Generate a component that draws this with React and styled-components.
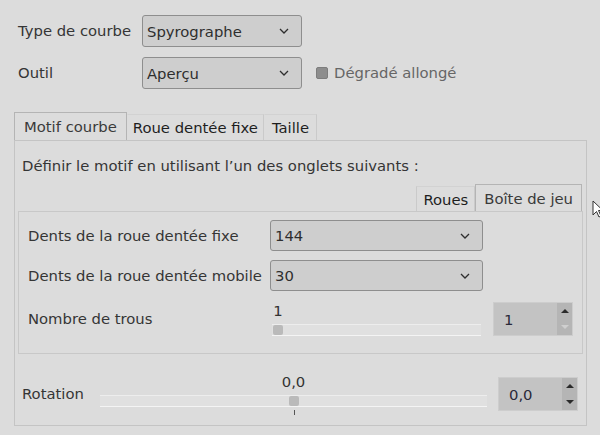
import React from 'react';
import styled, { createGlobalStyle } from 'styled-components';

const Global = createGlobalStyle`
  html, body { margin: 0; padding: 0; background: #dcdcdc; }
  body {
    width: 600px; height: 435px; overflow: hidden;
    font-family: "DejaVu Sans", "Noto Sans", sans-serif;
    font-size: 14.8px; color: #353535;
  }
`;

const Page = styled.div`
  position: relative;
  width: 600px;
  height: 435px;
  box-sizing: border-box;
  padding: 15px 13px 0 14px;
  background: #dcdcdc;
`;

const TopForm = styled.div`
  display: grid;
  grid-template-columns: 124px auto;
  row-gap: 10px;
  padding-left: 4px;
  align-items: center;
`;

const Label = styled.div`
  line-height: 20px;
  white-space: nowrap;
  color: ${p => p.$muted ? '#666' : '#353535'};
`;

const SelectBox = styled.div`
  box-sizing: border-box;
  width: ${p => p.$w}px;
  height: ${p => p.$h || 32}px;
  display: flex;
  align-items: center;
  justify-content: space-between;
  padding: 0 12px 0 4px;
  background: #cecece;
  border: 1px solid #8e8e8e;
  border-radius: 3px;
  color: #2e2e2e;
`;

const Inline = styled.div`
  display: flex;
  align-items: center;
`;

const CheckRow = styled.div`
  display: flex;
  align-items: center;
  gap: 6px;
  margin-left: 14px;
`;

const CheckBox = styled.div`
  width: 10px;
  height: 10px;
  background: #8d8d8d;
  border: 1px solid #7d7d7d;
  border-radius: 2px;
`;

const Notebook = styled.div`
  margin-top: ${p => p.$mt || 0}px;
  display: flex;
  flex-direction: column;
`;

const TabBar = styled.div`
  display: flex;
  align-items: flex-end;
  justify-content: ${p => p.$right ? 'flex-end' : 'flex-start'};
  height: ${p => p.$h}px;
  padding-right: ${p => p.$pr || 0}px;
`;

const Tab = styled.div`
  box-sizing: border-box;
  height: ${p => p.$active ? p.$h : p.$h - 2}px;
  display: flex;
  align-items: center;
  padding: 0 ${p => p.$pad || 7}px;
  white-space: nowrap;
  color: ${p => p.$active ? '#3a3a3a' : '#1e1e1e'};
  border: 1px solid ${p => p.$active ? '#b4b4b4' : 'transparent'};
  border-bottom: none;
  ${p => !p.$active && 'border-right-color: #cacaca; border-top-color: #d2d2d2;'}
  ${p => p.$leftLine && 'border-left-color: #cacaca;'}
`;

const Panel = styled.div`
  border: 1px solid ${p => p.$c || '#c4c4c4'};
  box-sizing: border-box;
  padding: ${p => p.$pad};
`;

const Description = styled.div`
  line-height: 20px;
  padding-left: 4px;
  margin-bottom: 8px;
  white-space: nowrap;
`;

const FormGrid = styled.div`
  display: grid;
  grid-template-columns: 232px 213px 80px;
  column-gap: 10px;
  align-items: center;
`;

const Cell = styled.div`
  grid-column: ${p => p.$col};
  margin-top: ${p => p.$mt || 0}px;
`;

const SliderWrap = styled.div`
  display: flex;
  flex-direction: column;
  padding: 0 ${p => p.$px || 0}px;
`;

const SliderValue = styled.div`
  position: relative;
  height: 18px;
  line-height: 18px;
  color: #333;
`;

const ValueText = styled.span`
  position: absolute;
  top: 0;
  transform: translateX(-50%);
  white-space: nowrap;
`;

const Track = styled.div`
  position: relative;
  height: 12px;
  box-sizing: border-box;
  margin-top: 4px;
  background: #e0e0e0;
  border-top: 1px solid #ededed;
  border-bottom: 1px solid #f4f4f4;
`;

const Handle = styled.div`
  position: absolute;
  top: 0;
  width: 10px;
  height: 10px;
  margin-left: -5px;
  background: #bababa;
  border-radius: 2px;
`;

const Tick = styled.div`
  position: relative;
  height: 8px;
  &::after {
    content: '';
    position: absolute;
    left: var(--x);
    top: 3px;
    width: 1px;
    height: 5px;
    background: #555;
  }
`;

const Spin = styled.div`
  box-sizing: border-box;
  width: 80px;
  height: 34px;
  display: flex;
  background: #c3c3c3;
  border: 1px solid #cdcdcd;
`;

const SpinText = styled.div`
  flex: 1;
  display: flex;
  align-items: center;
  padding-left: 10px;
  color: #2a2a3a;
`;

const SpinButtons = styled.div`
  width: 15px;
  display: flex;
  flex-direction: column;
  background: #b5b5b5;
`;

const SpinBtn = styled.div`
  flex: 1;
  display: flex;
  align-items: center;
  justify-content: center;
  &::after {
    content: '';
    border-left: 4px solid transparent;
    border-right: 4px solid transparent;
    ${p => p.$up
      ? `border-bottom: 4px solid ${p.$disabled ? '#cfcfcf' : '#2b2b2b'};`
      : `border-top: 4px solid ${p.$disabled ? '#cfcfcf' : '#2b2b2b'};`}
  }
`;

const RotationRow = styled.div`
  display: grid;
  grid-template-columns: 78px 387px 80px;
  column-gap: 0;
  align-items: center;
  padding-left: 4px;
  margin-top: 19px;
  & > :last-child { margin-left: 11px; }
`;

const Cursor = styled.svg`
  position: absolute;
  left: 592px;
  top: 200px;
`;

const Chevron = () => (
  <svg width="10" height="6" viewBox="0 0 10 6">
    <path d="M1 1 L5 5 L9 1" fill="none" stroke="#2e2e2e" strokeWidth="1.3" />
  </svg>
);

const Select = ({ w, h, children }) => (
  <SelectBox $w={w} $h={h}>
    <span>{children}</span>
    <Chevron />
  </SelectBox>
);

const SpinButton = ({ value, upDisabled, downDisabled }) => (
  <Spin>
    <SpinText>{value}</SpinText>
    <SpinButtons>
      <SpinBtn $up $disabled={upDisabled} />
      <SpinBtn $disabled={downDisabled} />
    </SpinButtons>
  </Spin>
);

const Slider = ({ value, fraction, tick, px, handleOffset = 0 }) => {
  const pos = `calc(${fraction * 100}% + ${handleOffset}px)`;
  return (
    <SliderWrap $px={px}>
      <SliderValue>
        <ValueText style={{ left: pos }}>{value}</ValueText>
      </SliderValue>
      <Track>
        <Handle style={{ left: pos }} />
      </Track>
      {tick && <Tick style={{ '--x': pos }} />}
    </SliderWrap>
  );
};

export default function App() {
  return (
    <>
      <Global />
      <Page>
        <TopForm>
          <Label>Type de courbe</Label>
          <Select w={160}>Spyrographe</Select>
          <Label>Outil</Label>
          <Inline>
            <Select w={160}>Aperçu</Select>
            <CheckRow>
              <CheckBox />
              <Label $muted>Dégradé allongé</Label>
            </CheckRow>
          </Inline>
        </TopForm>

        <Notebook $mt={23}>
          <TabBar $h={28}>
            <Tab $active $h={28} $pad={9}>Motif courbe</Tab>
            <Tab $h={28} $pad={5}>Roue dentée fixe</Tab>
            <Tab $h={28} $pad={7}>Taille</Tab>
          </TabBar>
          <Panel $pad="15px 3px 10px 3px">
            <Description>Définir le motif en utilisant l’un des onglets suivants :</Description>
            <Notebook>
              <TabBar $right $h={27} $pr={1}>
                <Tab $h={27} $pad={6} $leftLine>Roues</Tab>
                <Tab $active $h={27} $pad={8}>Boîte de jeu</Tab>
              </TabBar>
              <Panel $c="#c8c8c8" $pad="8px 9px 17px 9px">
                <FormGrid>
                  <Label>Dents de la roue dentée fixe</Label>
                  <Select w={213} h={31}>144</Select>
                  <span />
                  <Cell $col="1" $mt={9}><Label>Dents de la roue dentée mobile</Label></Cell>
                  <Cell $col="2" $mt={9}><Select w={213} h={31}>30</Select></Cell>
                  <Cell $col="3" $mt={9} />
                  <Cell $col="1" $mt={11}><Label>Nombre de trous</Label></Cell>
                  <Cell $col="2" $mt={11}>
                    <SliderWrap $px={2}>
                      <Slider value="1" fraction={0} handleOffset={6} />
                    </SliderWrap>
                  </Cell>
                  <Cell $col="3" $mt={11}>
                    <SpinButton value="1" downDisabled />
                  </Cell>
                </FormGrid>
              </Panel>
            </Notebook>
            <RotationRow>
              <Label>Rotation</Label>
              <Slider value="0,0" fraction={0.5} tick />
              <SpinButton value="0,0" />
            </RotationRow>
          </Panel>
        </Notebook>

        <Cursor width="10" height="20" viewBox="0 0 10 20">
          <path d="M1 1 L1 15 L4.5 11.5 L7 17 L9 16 L6.5 10.5 L11 10.5 Z" fill="#fff" stroke="#333" strokeWidth="1" />
        </Cursor>
      </Page>
    </>
  );
}
